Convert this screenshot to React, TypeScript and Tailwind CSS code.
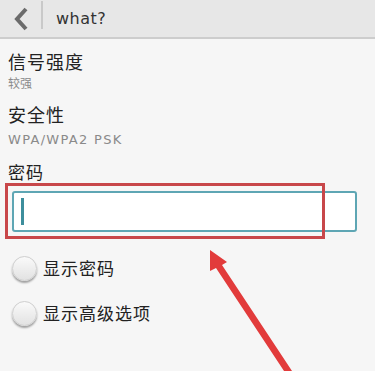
import { useState } from 'react';

const Radio = ({ label }: { label: string }) => (
  <div className="flex items-center gap-[6px] h-[45px] pl-[12px]">
    <div className="w-[25px] h-[25px] rounded-full bg-gradient-to-b from-[#fafafa] to-[#e2e2e2] border border-[#cfcfcf] shadow-[0_2px_2px_rgba(0,0,0,0.35)]" />
    <span className="text-[17px] tracking-[1px] text-[#222]">{label}</span>
  </div>
);

const App = () => {
  const [pwd, setPwd] = useState('');

  return (
    <div
      className="relative w-[375px] h-[371px] overflow-hidden bg-[#f6f6f6]"
      style={{ fontFamily: '"Noto Sans", "Noto Sans CJK SC", sans-serif' }}
    >
      {/* 상단 바 */}
      <div className="flex items-center h-[39px] bg-[#e7e7e7] border-b-2 border-[#cdcdcd]">
        <div className="w-[41px] h-full flex items-center justify-center">
          <svg width="18" height="24" viewBox="0 0 18 24">
            <path d="M14 2 L5 12 L14 22" fill="none" stroke="#6b6b6b" strokeWidth="4" strokeLinejoin="miter" />
          </svg>
        </div>
        <div className="w-[2px] h-[28px] bg-[#c9c9c9] self-start mt-[1px]" />
        <span className="ml-[13px] text-[16px] text-[#333] tracking-[0.5px]" style={{ fontFamily: '"DejaVu Sans", sans-serif' }}>what?</span>
      </div>

      <div className="px-[8px] pt-[11px]">
        <div className="text-[18px] leading-[24px] tracking-[1px] text-[#222]">信号强度</div>
        <div className="text-[12px] leading-[14px] mt-[3px] text-[#8a8a8a]">较强</div>
        <div className="text-[18px] leading-[24px] mt-[12px] tracking-[1px] text-[#222]">安全性</div>
        <div
          className="text-[13px] leading-[16px] mt-[5px] text-[#8a8a8a] tracking-[1.3px]"
          style={{ fontFamily: '"DejaVu Sans", sans-serif' }}
        >
          WPA/WPA2 PSK
        </div>
        <div className="text-[17px] leading-[22px] mt-[14px] tracking-[1px] text-[#222]">密码</div>
      </div>

      {/* 입력창 + 빨간 박스 */}
      <div className="relative mt-[7px] ml-[12px] mr-[18px]">
        <div className="h-[41px] rounded-[3px] border-2 border-[#5ea6b4] bg-white flex items-center pl-[8px]">
          <input
            value={pwd}
            onChange={(e) => setPwd(e.target.value)}
            className="w-full h-full outline-none bg-transparent"
          />
          <div className="absolute left-[9px] top-[7px] w-[3px] h-[27px] bg-[#3d8e9c]" />
        </div>
        <div className="absolute -left-[7px] -top-[8px] w-[320px] h-[56px] border-[3px] border-[#c8474a] pointer-events-none" />
      </div>

      <div className="mt-[14px]">
        <Radio label="显示密码" />
        <Radio label="显示高级选项" />
      </div>

      {/* 화살표 */}
      <svg className="absolute left-0 top-0 pointer-events-none" width="375" height="371">
        <polygon points="210,250 227,262 222,265 292,371 284,371 216,268 210,271" fill="#e23b3b" />
      </svg>
    </div>
  );
};

export default App;
